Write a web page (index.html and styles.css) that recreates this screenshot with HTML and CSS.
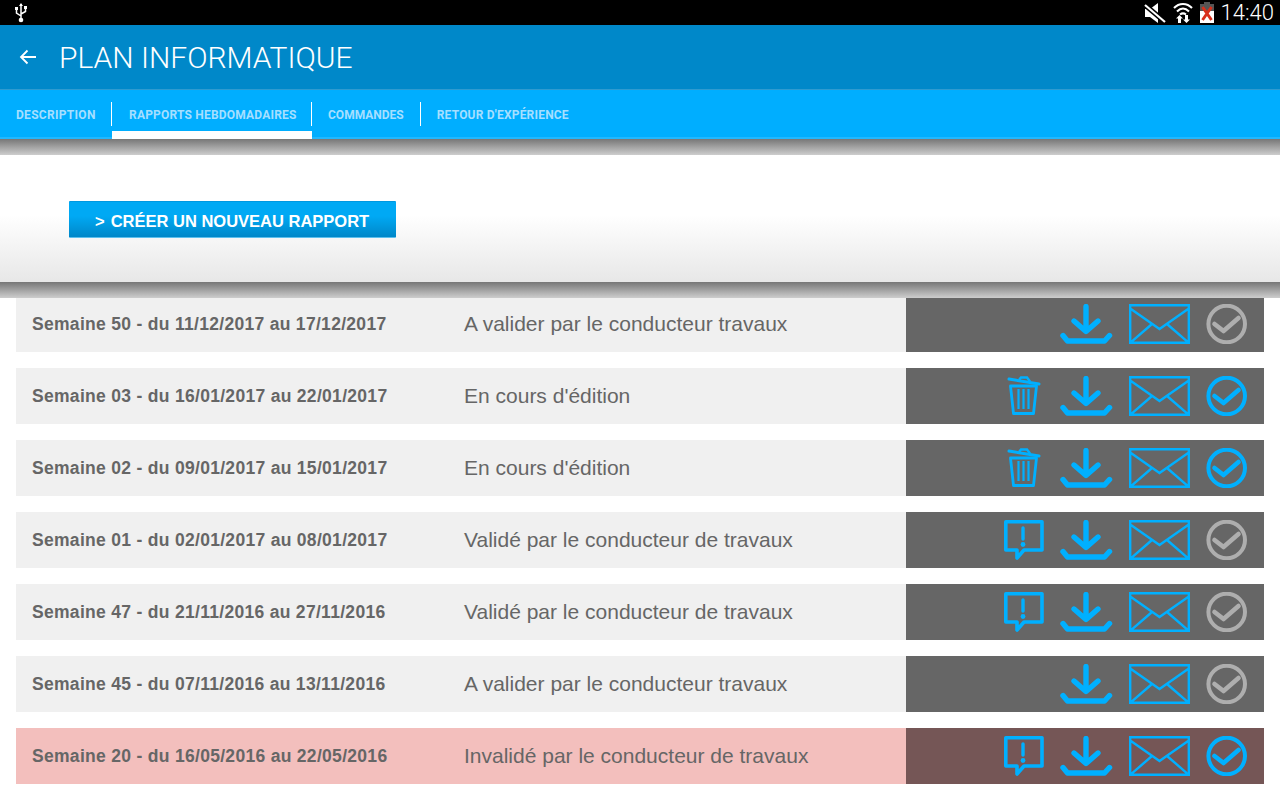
FILE: index.html
```html
<!DOCTYPE html>
<html lang="fr">
<head>
    <meta charset="UTF-8">
    <meta name="viewport" content="width=device-width, initial-scale=1.0">
    <title>Plan informatique</title>
    <link rel="stylesheet" href="styles.css">
</head>
<body>
    <svg class="sprites" width="0" height="0">
        <symbol id="i-download" viewBox="0 0 53 40">
            <path d="M26 2.5V27M14 17L26 27.5L38 17" fill="none" stroke="currentColor" stroke-width="5.4" stroke-linecap="round" stroke-linejoin="round"/>
            <path d="M3 31.5L7.5 37H44.5L49.5 31.5" fill="none" stroke="currentColor" stroke-width="5.4" stroke-linecap="round" stroke-linejoin="round"/>
        </symbol>
        <symbol id="i-mail" viewBox="0 0 61 40">
            <path d="M1.2 1.2H59.8V38.8H1.2ZM1.2 4.5L30.5 25L59.8 4.5M1.2 38.8L23 20M59.8 38.8L38 20" fill="none" stroke="currentColor" stroke-width="2.4"/>
        </symbol>
        <symbol id="i-check" viewBox="0 0 42 40">
            <circle cx="20.7" cy="20" r="18.3" fill="none" stroke="currentColor" stroke-width="4"/>
            <path d="M8.5 20L17.5 27L32.5 14" fill="none" stroke="currentColor" stroke-width="4.6" stroke-linecap="round" stroke-linejoin="round"/>
        </symbol>
        <symbol id="i-trash" viewBox="0 0 40 40">
            <path d="M5 3L35 8" fill="none" stroke="currentColor" stroke-width="3" stroke-linecap="round"/>
            <path d="M15 4L17 1.5H23L26 5.5" fill="none" stroke="currentColor" stroke-width="2.4"/>
            <path d="M6.5 10L9.5 37.5H29.5L32.5 10Z" fill="none" stroke="currentColor" stroke-width="2.8" stroke-linejoin="round"/>
            <path d="M14.5 13V33M19.5 13V33M24.5 13V33" fill="none" stroke="currentColor" stroke-width="2.2"/>
        </symbol>
        <symbol id="i-alert" viewBox="0 0 40 40">
            <path d="M1.8 1.8H38V30H20L13 38V30H1.8Z" fill="none" stroke="currentColor" stroke-width="3.6" stroke-linejoin="round"/>
            <path d="M19 8V19" fill="none" stroke="currentColor" stroke-width="3.4" stroke-linecap="round"/>
            <circle cx="19" cy="24.5" r="2.4" fill="currentColor"/>
        </symbol>
    </svg>

    <div class="status-bar">
        <svg class="usb" width="14" height="20" viewBox="0 0 14 20">
            <path d="M7 1V17M7 13L2.5 10V6M7 11L11.5 8.5V5" fill="none" stroke="#fff" stroke-width="1.5"/>
            <path d="M7 0L9 3H5Z" fill="#fff"/>
            <circle cx="7" cy="17" r="2.3" fill="#fff"/>
            <rect x="1" y="4" width="3" height="3" fill="#fff"/>
            <rect x="10" y="3" width="3" height="3" fill="#fff"/>
        </svg>
        <div class="status-right">
            <svg width="22" height="20" viewBox="0 0 22 20">
                <path d="M1 6H6L14 0V20L6 14H1Z" fill="#fff"/>
                <path d="M1 2L21 19" stroke="#000" stroke-width="5"/>
                <path d="M1 2L21 19" stroke="#fff" stroke-width="2.2"/>
            </svg>
            <svg class="wifi" width="20" height="21" viewBox="0 0 20 21">
                <path d="M1 6C6 0.5 14 0.5 19 6M4 9.5C8 5.5 12 5.5 16 9.5M7 12.5C9 11 11 11 13 12.5" fill="none" stroke="#fff" stroke-width="2"/>
                <path d="M6.5 13L10 16.5H8V21H5V16.5H3ZM13.5 21L10 17.5H12V13H15V17.5H17Z" fill="#fff"/>
            </svg>
            <svg width="14" height="21" viewBox="0 0 14 21">
                <rect x="4" y="0" width="6" height="3" fill="#555"/>
                <rect x="0" y="2" width="14" height="19" fill="#fff"/>
                <rect x="0" y="2" width="14" height="7" fill="#555"/>
                <path d="M2.5 5L11.5 18M11.5 5L2.5 18" stroke="#d8301c" stroke-width="3"/>
            </svg>
            <span class="clock">14:40</span>
        </div>
    </div>

    <header class="app-bar">
        <svg class="back" width="18" height="16" viewBox="0 0 18 16">
            <path d="M17 8H2M8.5 1.5L2 8L8.5 14.5" fill="none" stroke="#fff" stroke-width="1.8"/>
        </svg>
        <h1>PLAN INFORMATIQUE</h1>
    </header>

    <nav class="tabs">
        <a class="tab first">DESCRIPTION</a>
        <a class="tab active">RAPPORTS HEBDOMADAIRES</a>
        <a class="tab tight">COMMANDES</a>
        <a class="tab last">RETOUR D'EXPÉRIENCE</a>
    </nav>
    <div class="shadow"></div>

    <section class="toolbar">
        <button class="create-btn"><span class="chevron">&gt;</span>CRÉER UN NOUVEAU RAPPORT</button>
    </section>
    <div class="shadow over"></div>

    <div class="reports">
        <div class="report">
            <div class="report-name">Semaine 50 - du 11/12/2017 au 17/12/2017</div>
            <div class="report-status">A valider par le conducteur travaux</div>
            <div class="report-actions">
                <svg class="ic-download"><use href="#i-download"/></svg>
                <svg class="ic-mail"><use href="#i-mail"/></svg>
                <svg class="ic-check off"><use href="#i-check"/></svg>
            </div>
        </div>
        <div class="report">
            <div class="report-name">Semaine 03 - du 16/01/2017 au 22/01/2017</div>
            <div class="report-status">En cours d'édition</div>
            <div class="report-actions">
                <svg class="ic-square"><use href="#i-trash"/></svg>
                <svg class="ic-download"><use href="#i-download"/></svg>
                <svg class="ic-mail"><use href="#i-mail"/></svg>
                <svg class="ic-check"><use href="#i-check"/></svg>
            </div>
        </div>
        <div class="report">
            <div class="report-name">Semaine 02 - du 09/01/2017 au 15/01/2017</div>
            <div class="report-status">En cours d'édition</div>
            <div class="report-actions">
                <svg class="ic-square"><use href="#i-trash"/></svg>
                <svg class="ic-download"><use href="#i-download"/></svg>
                <svg class="ic-mail"><use href="#i-mail"/></svg>
                <svg class="ic-check"><use href="#i-check"/></svg>
            </div>
        </div>
        <div class="report">
            <div class="report-name">Semaine 01 - du 02/01/2017 au 08/01/2017</div>
            <div class="report-status">Validé par le conducteur de travaux</div>
            <div class="report-actions">
                <svg class="ic-square"><use href="#i-alert"/></svg>
                <svg class="ic-download"><use href="#i-download"/></svg>
                <svg class="ic-mail"><use href="#i-mail"/></svg>
                <svg class="ic-check off"><use href="#i-check"/></svg>
            </div>
        </div>
        <div class="report">
            <div class="report-name">Semaine 47 - du 21/11/2016 au 27/11/2016</div>
            <div class="report-status">Validé par le conducteur de travaux</div>
            <div class="report-actions">
                <svg class="ic-square"><use href="#i-alert"/></svg>
                <svg class="ic-download"><use href="#i-download"/></svg>
                <svg class="ic-mail"><use href="#i-mail"/></svg>
                <svg class="ic-check off"><use href="#i-check"/></svg>
            </div>
        </div>
        <div class="report">
            <div class="report-name">Semaine 45 - du 07/11/2016 au 13/11/2016</div>
            <div class="report-status">A valider par le conducteur travaux</div>
            <div class="report-actions">
                <svg class="ic-download"><use href="#i-download"/></svg>
                <svg class="ic-mail"><use href="#i-mail"/></svg>
                <svg class="ic-check off"><use href="#i-check"/></svg>
            </div>
        </div>
        <div class="report rejected">
            <div class="report-name">Semaine 20 - du 16/05/2016 au 22/05/2016</div>
            <div class="report-status">Invalidé par le conducteur de travaux</div>
            <div class="report-actions">
                <svg class="ic-square"><use href="#i-alert"/></svg>
                <svg class="ic-download"><use href="#i-download"/></svg>
                <svg class="ic-mail"><use href="#i-mail"/></svg>
                <svg class="ic-check"><use href="#i-check"/></svg>
            </div>
        </div>
    </div>
</body>
</html>
```

FILE: styles.css
```css
:root {
    --blue-dark: #0088c9;
    --blue: #00aeff;
    --row-grey: #666;
}

html, body {
    height: 800px;
    overflow: hidden;
}

body {
    margin: 0;
    background: #fff;
    font-family: "Liberation Sans", Arial, sans-serif;
    color: var(--row-grey);
}

.sprites {
    position: absolute;
}

.status-bar {
    height: 25px;
    background: #000;
    display: flex;
    align-items: center;
    justify-content: space-between;
    padding: 0 6px 0 14px;
}

.status-right {
    display: flex;
    align-items: center;
    gap: 7px;
}

.clock {
    font-family: Roboto, sans-serif;
    font-weight: 300;
    font-size: 22px;
    color: #fff;
}

.app-bar {
    height: 65px;
    background: var(--blue-dark);
    display: flex;
    align-items: center;
    padding-left: 19px;
    gap: 22px;
    box-sizing: border-box;
    border-bottom: 1px solid #2f9bd0;
}

.app-bar h1 {
    margin: 0;
    font-family: Roboto, sans-serif;
    font-weight: 300;
    font-size: 30px;
    color: #fff;
}

.tabs {
    height: 49px;
    box-sizing: border-box;
    background: var(--blue);
    border-bottom: 2px solid #22b8ff;
    display: flex;
}

.tab {
    position: relative;
    padding: 0 16px;
    height: 49px;
    line-height: 51px;
    font-family: Roboto, sans-serif;
    font-weight: 700;
    font-size: 12px;
    letter-spacing: 0.2px;
    color: #a6dfff;
}

.tab.first {
    width: 80px;
    letter-spacing: 0.3px;
}

.tab.active {
    width: 169px;
    padding: 0 14px 0 17px;
}

.tab.tight {
    letter-spacing: 0;
    padding-right: 17px;
}

.tab::after {
    content: "";
    position: absolute;
    right: 0;
    top: 12px;
    height: 24px;
    width: 1px;
    background: #fff;
}

.tab.last::after {
    display: none;
}

.tab.active::before {
    content: "";
    position: absolute;
    left: 0;
    right: 0;
    bottom: 0;
    height: 8px;
    background: #fff;
}

.shadow {
    height: 16px;
    background: linear-gradient(#777, #cdcdcd);
}

.shadow.over {
    position: relative;
    z-index: 1;
}

.toolbar {
    height: 127px;
    padding: 46px 0 0 69px;
    box-sizing: border-box;
    background: linear-gradient(#fff 0, #fff 60px, #e8e8e8 125px);
}

.create-btn {
    display: block;
    width: 327px;
    height: 37px;
    padding: 3px 0 0 26px;
    text-align: left;
    border: 0;
    border-top: 1px solid #0098e0;
    border-bottom: 1px solid #5cc0ee;
    border-radius: 1px;
    background: linear-gradient(#00a9f4 0, #00a9f4 40%, #0087c8 100%);
    color: #fff;
    font-family: "Liberation Sans", Arial, sans-serif;
    font-weight: 700;
    font-size: 16.5px;
}

.chevron {
    margin-right: 6px;
}

.reports {
    margin-top: -2px;
    padding: 0 16px;
    display: flex;
    flex-direction: column;
    gap: 16px;
}

.report {
    height: 56px;
    display: flex;
    align-items: center;
    background: #f0f0f0;
}

.report-name {
    width: 448px;
    padding-left: 16px;
    box-sizing: border-box;
    font-weight: 700;
    font-size: 17.5px;
    letter-spacing: 0.3px;
}

.report-status {
    flex: 1;
    font-size: 21px;
}

.report-actions {
    width: 358px;
    height: 56px;
    box-sizing: border-box;
    background: var(--row-grey);
    display: flex;
    align-items: center;
    justify-content: flex-end;
    gap: 16px;
    padding-right: 16px;
    color: #00b0ff;
}

.report-actions svg {
    height: 40px;
}

.ic-square { width: 40px; }
.ic-download { width: 53px; }
.ic-mail { width: 61px; }
.ic-check { width: 42px; }

.ic-check.off {
    color: #aeaeae;
}

.rejected {
    background: #f3bfbd;
}

.rejected .report-actions {
    background: #755656;
}
```
